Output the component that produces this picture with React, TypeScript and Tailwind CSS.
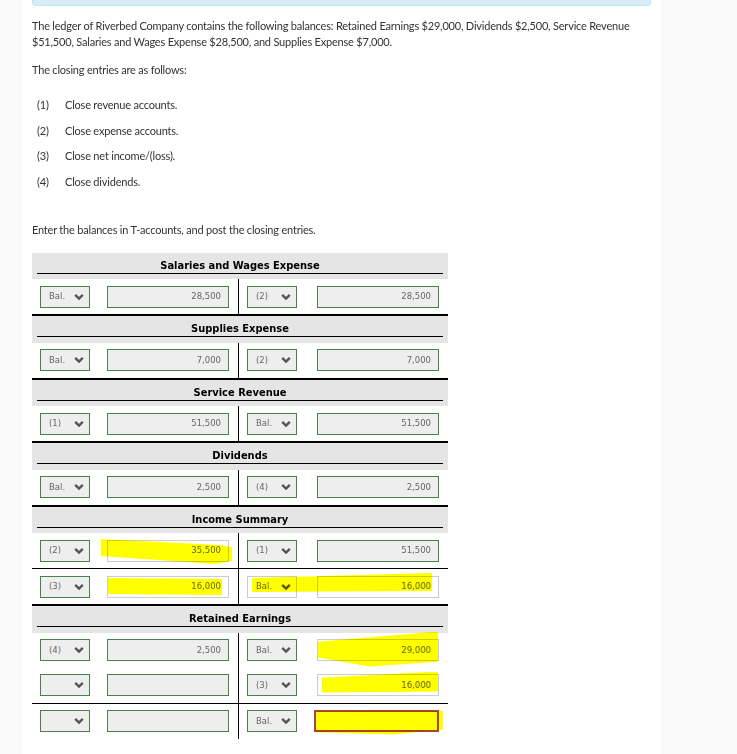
import React from "react";

type Field = { text: string; kind: "select" | "input"; plain?: boolean; err?: boolean };
type Mark = { x: number; y: number; w: number; h: number; clip: string };
type Row = { line?: boolean; cells: [Field, Field, Field, Field]; marks?: Mark[] };
type Account = { title: string; rows: Row[] };

const s = (text: string, plain?: boolean): Field => ({ text, kind: "select", plain });
const v = (text: string, plain?: boolean, err?: boolean): Field => ({ text, kind: "input", plain, err });

// marker scribbles, coords relative to the row (row left = page x 32)
const accounts: Account[] = [
  { title: "Salaries and Wages Expense", rows: [{ cells: [s("Bal."), v("28,500"), s("(2)"), v("28,500")] }] },
  { title: "Supplies Expense", rows: [{ cells: [s("Bal."), v("7,000"), s("(2)"), v("7,000")] }] },
  { title: "Service Revenue", rows: [{ cells: [s("(1)"), v("51,500"), s("Bal."), v("51,500")] }] },
  { title: "Dividends", rows: [{ cells: [s("Bal."), v("2,500"), s("(4)"), v("2,500")] }] },
  {
    title: "Income Summary",
    rows: [
      {
        cells: [s("(2)"), v("35,500", true), s("(1)"), v("51,500")],
        marks: [{ x: 69, y: 5, w: 131, h: 26, clip: "polygon(0% 4%, 91% 27%, 100% 35%, 100% 88%, 87% 100%, 0% 69%)" }],
      },
      {
        line: true,
        cells: [s("(3)"), v("16,000", true), s("Bal.", true), v("16,000", true)],
        marks: [
          { x: 76, y: 9, w: 114, h: 17, clip: "polygon(0% 0%, 100% 6%, 100% 100%, 0% 94%)" },
          { x: 220, y: 4, w: 180, h: 19, clip: "polygon(0% 26%, 100% 0%, 100% 95%, 0% 100%)" },
        ],
      },
    ],
  },
  {
    title: "Retained Earnings",
    rows: [
      {
        cells: [s("(4)"), v("2,500"), s("Bal."), v("29,000", true)],
        marks: [{ x: 286, y: -1, w: 120, h: 35, clip: "polygon(0% 29%, 100% 0%, 100% 86%, 43% 100%, 0% 74%)" }],
      },
      {
        cells: [s(""), v(""), s("(3)"), v("16,000", true)],
        marks: [{ x: 290, y: 4, w: 116, h: 21, clip: "polygon(0% 29%, 100% 0%, 100% 95%, 0% 100%)" }],
      },
      {
        line: true,
        cells: [s(""), v(""), s("Bal."), v("", true, true)],
        marks: [{ x: 284, y: 7, w: 127, h: 24, clip: "polygon(0% 4%, 100% 0%, 100% 80%, 60% 100%, 0% 90%)" }],
      },
    ],
  },
];

function Chevron() {
  return (
    <svg width="10" height="8" viewBox="0 0 10 8" className="shrink-0">
      <polyline points="1.2,1.8 5,5.6 8.8,1.8" fill="none" stroke="#555" strokeWidth="2.4" />
    </svg>
  );
}

function Box({ f }: { f: Field }) {
  const skin = f.err
    ? "border-2 border-[#a94442] bg-white"
    : f.plain
      ? "border border-[#cccccc] bg-white"
      : "border border-[#4b7f4b] bg-[#eeeeee]";
  if (f.kind === "select") {
    return (
      <div className={`flex h-[22px] w-[50px] items-center justify-between pl-[8px] pr-[5px] text-[8.5px] text-[#666] ${skin}`}>
        <span>{f.text}</span>
        <Chevron />
      </div>
    );
  }
  return (
    <div className={`flex h-[22px] items-center justify-end pr-[7px] text-[8.5px] text-[#666] ${f.err ? "w-[125px]" : "w-[122px]"} ${skin}`}>
      {f.text}
    </div>
  );
}

function TAccount({ acc, last }: { acc: Account; last: boolean }) {
  return (
    <div className={last ? "" : "border-b-2 border-black"}>
      <div className="h-[26.5px] bg-[#e5e5e5] px-[5px] pt-[5px]">
        <div className="border-b border-black text-center font-['DejaVu_Sans_Condensed','DejaVu_Sans',sans-serif] text-[11px] font-bold leading-[15px] text-black [font-stretch:condensed]">
          {acc.title}
        </div>
      </div>
      {acc.rows.map((row, i) => (
        <div key={i} className={`relative flex ${row.line ? "border-t border-black" : ""}`}>
          <div className="flex h-[35px] w-[207px] items-center border-r border-black pl-[8px] pr-[9px]">
            <Box f={row.cells[0]} />
            <div className="ml-auto">
              <Box f={row.cells[1]} />
            </div>
          </div>
          <div className="flex h-[35px] flex-1 items-center pl-[8px] pr-[9px]">
            <Box f={row.cells[2]} />
            <div className="ml-auto">
              <Box f={row.cells[3]} />
            </div>
          </div>
          {row.marks?.map((m, j) => (
            <div
              key={j}
              className="pointer-events-none absolute bg-[#ffff00] mix-blend-multiply"
              style={{ left: m.x, top: m.y, width: m.w, height: m.h, clipPath: m.clip }}
            />
          ))}
        </div>
      ))}
    </div>
  );
}

export default function App() {
  const steps = ["Close revenue accounts.", "Close expense accounts.", "Close net income/(loss).", "Close dividends."];
  return (
    <div className="min-h-screen bg-[#f9f9f9]">
      <div className="ml-[22px] min-h-[754px] w-[639px] bg-white px-[10px] font-['Lato',sans-serif] text-[11px] tracking-[-0.2px] text-[#333]">
        <div className="h-[6px] rounded-b-[4px] border border-t-0 border-[#bce8f1] bg-[#d9edf7]" />

        <p className="mt-[12px] leading-[16px]">
          The ledger of Riverbed Company contains the following balances: Retained Earnings $29,000, Dividends $2,500, Service Revenue
          $51,500, Salaries and Wages Expense $28,500, and Supplies Expense $7,000.
        </p>

        <p className="mt-[12px] leading-[16px]">The closing entries are as follows:</p>

        <div className="mt-[15px] flex flex-col">
          {steps.map((t, i) => (
            <div key={i} className="flex h-[25.4px] items-center">
              <span className="w-[33px] pl-[5px]">({i + 1})</span>
              <span>{t}</span>
            </div>
          ))}
        </div>

        <p className="mt-[27px] leading-[16px]">Enter the balances in T-accounts, and post the closing entries.</p>

        <div className="mt-[15px] w-[416px] font-['DejaVu_Sans',sans-serif] tracking-normal">
          {accounts.map((a, i) => (
            <TAccount key={a.title} acc={a} last={i === accounts.length - 1} />
          ))}
        </div>
      </div>
    </div>
  );
}
